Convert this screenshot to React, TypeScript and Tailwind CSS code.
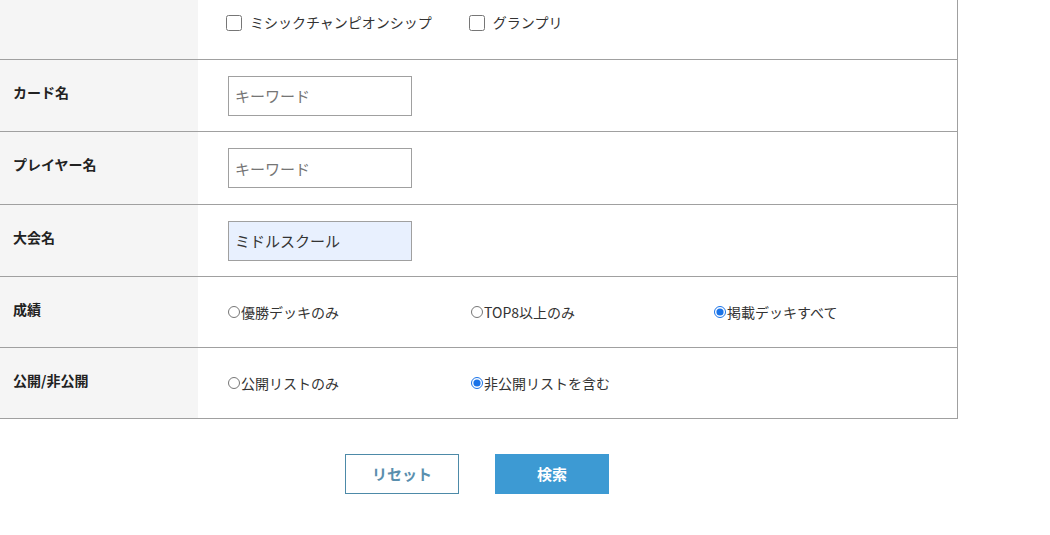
import { useEffect, useRef } from "react";

const labelCls =
  "w-[198px] shrink-0 bg-[#f5f5f5] pl-[13px] pt-[22px] text-[14px] font-bold leading-5 text-[#222]";

const inputCls =
  "h-10 w-[184px] border border-[#a0a0a0] px-[6px] text-[15px] text-[#333] placeholder:text-[#757575] outline-none";

const Row = ({ label, h, children }: { label: string; h: string; children: React.ReactNode }) => {
  return (
    <div className={`flex border-b border-[#a0a0a0] ${h}`}>
      <div className={labelCls}>{label}</div>
      <div className="flex flex-1 items-center pl-[30px]">{children}</div>
    </div>
  );
};

const Radio = ({ name, label, checked }: { name: string; label: string; checked?: boolean }) => {
  return (
    <label className="flex w-[243px] shrink-0 items-center text-[14px] text-[#333]">
      <input
        type="radio"
        name={name}
        defaultChecked={checked}
        className="m-0 mr-[1px] h-[12px] w-[12px] accent-[#1a73e8]"
      />
      <span>{label}</span>
    </label>
  );
};

export default function App() {
  const ref = useRef<HTMLInputElement>(null);

  useEffect(() => {
    const el = ref.current;
    if (el) {
      el.focus();
      el.setSelectionRange(el.value.length, el.value.length);
    }
  }, []);

  return (
    <div className="min-h-[535px] w-[1050px] bg-white font-['Noto_Sans_CJK_JP','Noto_Sans',sans-serif]">
      <div className="w-[958px] border-r border-[#a0a0a0]">
        <div className="flex h-[60px] border-b border-[#a0a0a0]">
          <div className="w-[198px] shrink-0 bg-[#f5f5f5]" />
          <div className="flex flex-1 items-start gap-[37px] pl-[28px] pt-[12px] text-[14px] text-[#333]">
            <label className="flex items-center gap-[8px]">
              <input type="checkbox" className="m-0 h-[16px] w-[16px]" />
              <span>ミシックチャンピオンシップ</span>
            </label>
            <label className="flex items-center gap-[8px]">
              <input type="checkbox" className="m-0 h-[16px] w-[16px]" />
              <span>グランプリ</span>
            </label>
          </div>
        </div>

        <Row label="カード名" h="h-[72px]">
          <input type="text" placeholder="キーワード" className={inputCls} />
        </Row>
        <Row label="プレイヤー名" h="h-[73px]">
          <input type="text" placeholder="キーワード" className={inputCls} />
        </Row>
        <Row label="大会名" h="h-[72px]">
          <input
            ref={ref}
            type="text"
            defaultValue="ミドルスクール"
            className={`${inputCls} bg-[#e8f0fe] caret-black`}
          />
        </Row>
        <Row label="成績" h="h-[71px]">
          <Radio name="result" label="優勝デッキのみ" />
          <Radio name="result" label="TOP8以上のみ" />
          <Radio name="result" label="掲載デッキすべて" checked />
        </Row>
        <Row label="公開/非公開" h="h-[71px]">
          <Radio name="public" label="公開リストのみ" />
          <Radio name="public" label="非公開リストを含む" checked />
        </Row>
      </div>

      <div className="flex w-[954px] justify-center gap-[36px] pt-[35px]">
        <button className="h-10 w-[114px] border border-[#4d8aa8] bg-white text-[15px] font-bold text-[#5a8fae]">
          リセット
        </button>
        <button className="h-10 w-[114px] bg-[#3d9ad3] text-[15px] font-bold text-white">
          検索
        </button>
      </div>
    </div>
  );
}
